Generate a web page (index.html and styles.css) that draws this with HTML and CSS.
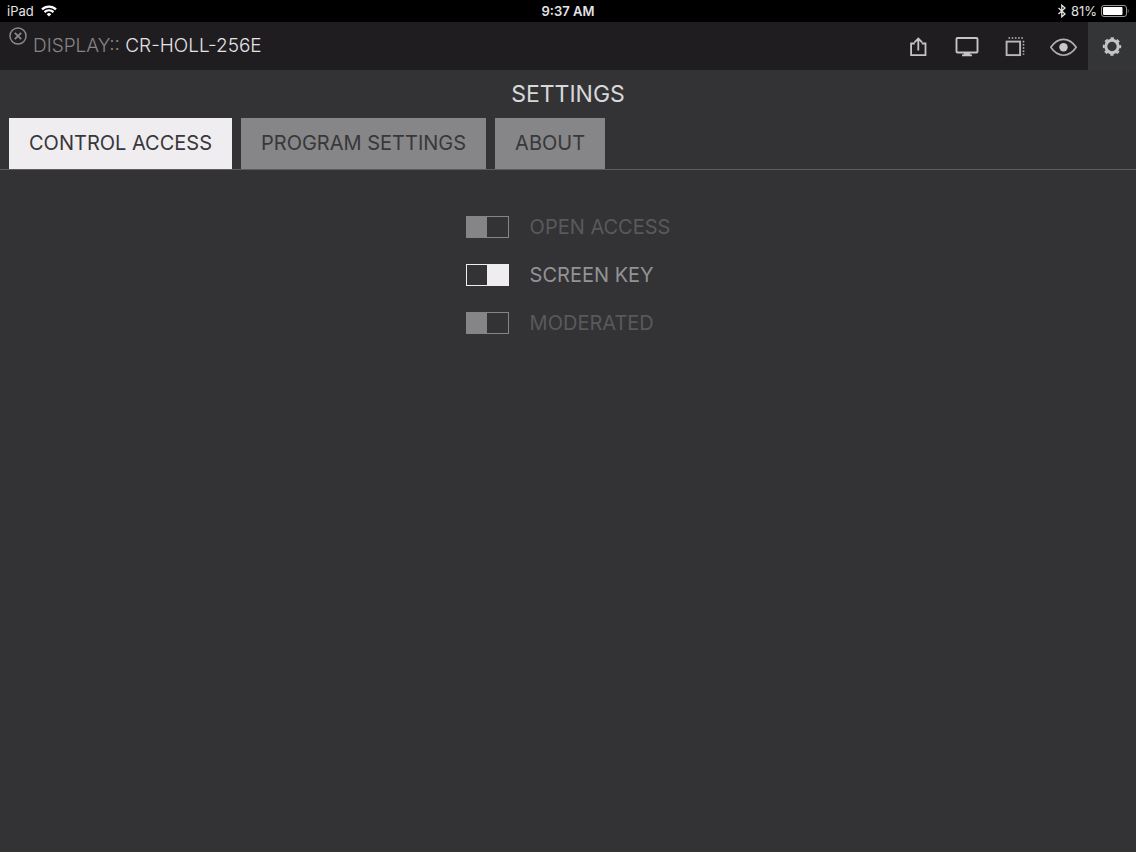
FILE: index.html
```html
<!DOCTYPE html>
<html lang="en">
<head>
    <meta charset="UTF-8">
    <meta name="viewport" content="width=device-width, initial-scale=1.0">
    <title>Settings</title>
    <link rel="stylesheet" href="styles.css">
</head>
<body>
    <div class="status-bar">
        <div class="status-left">
            <span>iPad</span>
            <svg width="16" height="12" viewBox="0 0 16 12" fill="none" stroke="#fff" stroke-width="2.2">
                <path d="M1 4.4a10 10 0 0 1 14 0M3.5 7.1a6.4 6.4 0 0 1 9 0"/>
                <path d="M8 11.6L5.7 9.2a3.3 3.3 0 0 1 4.6 0z" fill="#fff" stroke="none"/>
            </svg>
        </div>
        <span class="status-time">9:37 AM</span>
        <div class="status-right">
            <svg width="10" height="14" viewBox="0 0 10 14" fill="none" stroke="#e4e4e4" stroke-width="1.3">
                <path d="M1.500 4l6.500 6-3.200 2.800V1.200L8 4l-6.500 6"/>
            </svg>
            <span>81%</span>
            <svg width="28" height="14" viewBox="0 0 28 14">
                <rect x=".5" y="1.500" width="25" height="11" rx="2.5" fill="none" stroke="#999"/>
                <rect x="2" y="3" width="19.500" height="8" rx="1" fill="#fff"/>
                <path d="M26.800 5c1 .5 1 3.500 0 4z" fill="#999"/>
            </svg>
        </div>
    </div>

    <header class="top-bar">
        <button type="button" class="close-btn" aria-label="Close">
            <svg width="18" height="18" viewBox="0 0 18 18" fill="none" stroke="#8a898b" stroke-width="1.5">
                <circle cx="9" cy="9" r="8"/>
                <path d="M5.800 5.800l6.400 6.400M12.200 5.800l-6.400 6.400" stroke-width="1.800"/>
            </svg>
        </button>
        <h1 class="display-name"><span class="display-label">DISPLAY::</span> CR-HOLL-256E</h1>
        <nav class="tools">
            <button type="button" class="tool" aria-label="Share">
                <svg width="28" height="28" viewBox="0 0 28 28" fill="none" stroke="#c4c4c5" stroke-width="1.800">
                    <path d="M8.800 10.500H5.100v11.700h14.400V10.500h-3.700M12.300 17.500V5.800M8.500 9.300l3.800-3.800 3.800 3.800"/>
                </svg>
            </button>
            <button type="button" class="tool" aria-label="Screen">
                <svg width="28" height="28" viewBox="0 0 28 28" fill="none" stroke="#c4c4c5" stroke-width="1.900">
                    <rect x="2.500" y="5" width="21" height="14.500" rx="1"/>
                    <path d="M10 20h6l.5 1.500h1.500V23.200H8V21.500h1.500z" fill="#c4c4c5" stroke="none"/>
                </svg>
            </button>
            <button type="button" class="tool" aria-label="Layers">
                <svg width="28" height="28" viewBox="0 0 28 28" fill="none" stroke="#b8b8b9" stroke-width="1.900">
                    <rect x="4.600" y="8.600" width="13.500" height="13.500"/>
                    <path d="M6.500 5h16M21.500 7.800v14" stroke-width="1.600" stroke-dasharray="1.600 1.600"/>
                </svg>
            </button>
            <button type="button" class="tool" aria-label="Preview">
                <svg width="28" height="28" viewBox="0 0 28 28" fill="none" stroke="#b0b0b1" stroke-width="1.600">
                    <path d="M.800 14.300C4.500 8.800 8.500 6.400 13.500 6.400S22.500 8.800 26.200 14.300C22.500 19.800 18.500 22.200 13.500 22.200S4.500 19.800 .800 14.300z"/>
                    <circle cx="13.500" cy="14.300" r="4.200" fill="#c8c8c9" stroke="none"/>
                </svg>
            </button>
            <button type="button" class="tool tool-active" aria-label="Settings">
                <svg width="28" height="28" viewBox="0 0 28 28" fill="none" stroke="#c4c4c5">
                    <circle cx="14" cy="13.500" r="6.200" stroke-width="3"/>
                    <circle cx="14" cy="13.500" r="8.200" stroke-width="2" stroke-dasharray="3.400 3.040" stroke-dashoffset="1.700"/>
                </svg>
            </button>
        </nav>
    </header>

    <main>
        <h2 class="title">SETTINGS</h2>
        <div class="tabs" role="tablist">
            <button type="button" class="tab tab-active" role="tab" aria-selected="true">CONTROL ACCESS</button>
            <button type="button" class="tab" role="tab" aria-selected="false">PROGRAM SETTINGS</button>
            <button type="button" class="tab" role="tab" aria-selected="false">ABOUT</button>
        </div>
        <form class="options">
            <label class="option" for="open-access">
                <input type="checkbox" class="switch" id="open-access">
                <span>OPEN ACCESS</span>
            </label>
            <label class="option" for="screen-key">
                <input type="checkbox" class="switch" id="screen-key" checked>
                <span>SCREEN KEY</span>
            </label>
            <label class="option" for="moderated">
                <input type="checkbox" class="switch" id="moderated">
                <span>MODERATED</span>
            </label>
        </form>
    </main>
</body>
</html>
```

FILE: styles.css
```css
* {
    box-sizing: border-box;
}
body {
    font-family: Inter, "Liberation Sans", sans-serif;
    margin: 0;
    background-color: #333335;
    color: #e4e3e5;
}
button {
    font-family: inherit;
    border: none;
    padding: 0;
    background: none;
    cursor: pointer;
}
svg {
    display: block;
}

/* Status bar */
.status-bar {
    display: grid;
    grid-template-columns: 1fr auto 1fr;
    align-items: center;
    height: 22px;
    padding: 0 7px;
    background: #000;
    font-size: 13px;
    line-height: 22px;
}
.status-left,
.status-right {
    display: flex;
    align-items: center;
    gap: 7px;
}
.status-right {
    justify-content: flex-end;
    gap: 4px;
}
.status-time {
    font-weight: 600;
}

/* Top bar */
.top-bar {
    display: flex;
    height: 48px;
    padding-left: 9px;
    background: #1f1d20;
}
.close-btn {
    align-self: flex-start;
    margin-top: 5px;
}
.display-name {
    margin: 0 auto 0 6px;
    font-size: 19px;
    font-weight: 300;
    line-height: 48px;
}
.display-label {
    color: #858486;
}
.tools {
    display: flex;
}
.tool {
    display: flex;
    align-items: center;
    justify-content: center;
    width: 48px;
    padding-top: 2px;
}
.tool-active {
    background: #333537;
}

/* Settings */
.title {
    margin: 0;
    color: #d8d7d9;
    font-size: 23px;
    font-weight: 400;
    line-height: 48px;
    text-align: center;
}
.tabs {
    display: flex;
    gap: 9px;
    padding: 0 9px;
    border-bottom: 1px solid #5c5c5e;
}
.tab {
    height: 51px;
    padding: 0 20px 2px;
    background: #868587;
    color: #38373a;
    font-size: 20px;
    font-weight: 400;
}
.tab-active {
    background: #efedf0;
}
.options {
    display: grid;
    gap: 24px;
    width: fit-content;
    margin: 0 auto;
    padding-top: 45px;
}
.option {
    display: flex;
    align-items: center;
    gap: 21px;
    color: #59595b;
    font-size: 20px;
    font-weight: 400;
    line-height: 24px;
    cursor: pointer;
}
.option:has(.switch:checked) {
    color: #939294;
}
.switch {
    appearance: none;
    width: 43px;
    height: 22px;
    margin: 0;
    border: 1px solid #858486;
    background: linear-gradient(to right, #858486 50%, transparent 50%);
}
.switch:checked {
    border-color: #efedf0;
    background: linear-gradient(to right, transparent 50%, #efedf0 50%);
}
```
